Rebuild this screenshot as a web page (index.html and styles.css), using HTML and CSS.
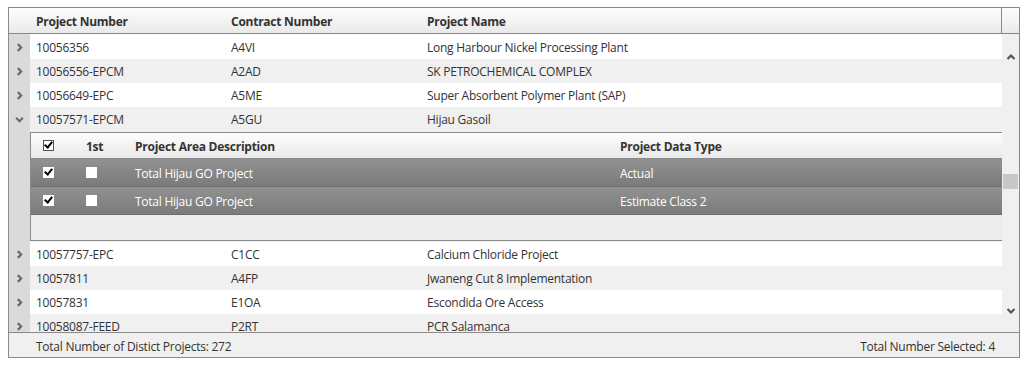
FILE: index.html
```html
<!DOCTYPE html>
<html lang="en">
<head>
    <meta charset="UTF-8">
    <title>Project Selection</title>
    <link rel="stylesheet" href="styles.css">
</head>
<body>
    <div class="grid">
        <!-- Column headers -->
        <div class="grid-header">
            <div class="expand-cell"></div>
            <div class="col col-number">Project Number</div>
            <div class="col col-contract">Contract Number</div>
            <div class="col col-name">Project Name</div>
            <div class="header-scroll"></div>
        </div>

        <!-- Body with rows and scrollbar -->
        <div class="grid-body">
            <div class="rows">
                <div class="row">
                    <div class="expand-cell"><svg class="chev" viewBox="0 0 8 8"><polyline points="2.5,1 5.5,4 2.5,7"/></svg></div>
                    <div class="col col-number">10056356</div>
                    <div class="col col-contract">A4VI</div>
                    <div class="col col-name">Long Harbour Nickel Processing Plant</div>
                </div>
                <div class="row alt">
                    <div class="expand-cell"><svg class="chev" viewBox="0 0 8 8"><polyline points="2.5,1 5.5,4 2.5,7"/></svg></div>
                    <div class="col col-number">10056556-EPCM</div>
                    <div class="col col-contract">A2AD</div>
                    <div class="col col-name">SK PETROCHEMICAL COMPLEX</div>
                </div>
                <div class="row">
                    <div class="expand-cell"><svg class="chev" viewBox="0 0 8 8"><polyline points="2.5,1 5.5,4 2.5,7"/></svg></div>
                    <div class="col col-number">10056649-EPC</div>
                    <div class="col col-contract">A5ME</div>
                    <div class="col col-name">Super Absorbent Polymer Plant (SAP)</div>
                </div>
                <div class="row alt">
                    <div class="expand-cell"><svg class="chev" viewBox="0 0 8 8"><polyline points="1,2.5 4,5.5 7,2.5"/></svg></div>
                    <div class="col col-number">10057571-EPCM</div>
                    <div class="col col-contract">A5GU</div>
                    <div class="col col-name">Hijau Gasoil</div>
                </div>

                <!-- Expanded detail -->
                <div class="detail-row">
                    <div class="expand-cell"></div>
                    <div class="detail">
                        <div class="detail-header">
                            <div class="d-check"><span class="box checked"></span></div>
                            <div class="d-first">1st</div>
                            <div class="d-desc">Project Area Description</div>
                            <div class="d-type">Project Data Type</div>
                        </div>
                        <div class="detail-line selected">
                            <div class="d-check"><span class="box checked"></span></div>
                            <div class="d-first"><span class="box"></span></div>
                            <div class="d-desc">Total Hijau GO Project</div>
                            <div class="d-type">Actual</div>
                        </div>
                        <div class="detail-line selected">
                            <div class="d-check"><span class="box checked"></span></div>
                            <div class="d-first"><span class="box"></span></div>
                            <div class="d-desc">Total Hijau GO Project</div>
                            <div class="d-type">Estimate Class 2</div>
                        </div>
                        <div class="detail-empty"></div>
                    </div>
                </div>

                <div class="row">
                    <div class="expand-cell"><svg class="chev" viewBox="0 0 8 8"><polyline points="2.5,1 5.5,4 2.5,7"/></svg></div>
                    <div class="col col-number">10057757-EPC</div>
                    <div class="col col-contract">C1CC</div>
                    <div class="col col-name">Calcium Chloride Project</div>
                </div>
                <div class="row alt">
                    <div class="expand-cell"><svg class="chev" viewBox="0 0 8 8"><polyline points="2.5,1 5.5,4 2.5,7"/></svg></div>
                    <div class="col col-number">10057811</div>
                    <div class="col col-contract">A4FP</div>
                    <div class="col col-name">Jwaneng Cut 8 Implementation</div>
                </div>
                <div class="row">
                    <div class="expand-cell"><svg class="chev" viewBox="0 0 8 8"><polyline points="2.5,1 5.5,4 2.5,7"/></svg></div>
                    <div class="col col-number">10057831</div>
                    <div class="col col-contract">E1OA</div>
                    <div class="col col-name">Escondida Ore Access</div>
                </div>
                <div class="row alt">
                    <div class="expand-cell"><svg class="chev" viewBox="0 0 8 8"><polyline points="2.5,1 5.5,4 2.5,7"/></svg></div>
                    <div class="col col-number">10058087-FEED</div>
                    <div class="col col-contract">P2RT</div>
                    <div class="col col-name">PCR Salamanca</div>
                </div>
            </div>

            <!-- Scrollbar -->
            <div class="scrollbar">
                <svg class="scroll-arrow" viewBox="0 0 10 8"><polyline points="1.5,6 5,2.5 8.5,6"/></svg>
                <div class="scroll-track"><div class="scroll-thumb"></div></div>
                <svg class="scroll-arrow" viewBox="0 0 10 8"><polyline points="1.5,2 5,5.5 8.5,2"/></svg>
            </div>
        </div>

        <!-- Footer -->
        <div class="grid-footer">
            <span>Total Number of Distict Projects: 272</span>
            <span>Total Number Selected: 4</span>
        </div>
    </div>
</body>
</html>
```

FILE: styles.css
```css
body {
    margin: 7px 8px;
    font-family: 'Open Sans', 'Liberation Sans', sans-serif;
    font-size: 12px;
    letter-spacing: -0.25px;
    color: #333;
    background: #fff;
}

.grid {
    width: 1010px;
    border: 1px solid #8a8a8a;
}

/* Header */
.grid-header {
    display: flex;
    height: 25px;
    border-bottom: 1px solid #8a8a8a;
    background: linear-gradient(#fdfdfd, #e9e9e9);
    font-weight: bold;
    align-items: center;
}

.grid-header .col {
    padding-top: 1px;
}

.grid-header .expand-cell {
    background: transparent;
}

.header-scroll {
    width: 17px;
    height: 100%;
    border-left: 1px solid #8a8a8a;
    margin-left: auto;
}

.expand-cell {
    width: 21px;
    flex-shrink: 0;
    align-self: stretch;
    background: #dadada;
    display: flex;
    align-items: center;
    justify-content: center;
}

.col {
    padding-left: 6px;
    white-space: nowrap;
    overflow: hidden;
}

.col-number { width: 189px; }
.col-contract { width: 190px; }
.col-name { flex: 1; }

/* Body */
.grid-body {
    display: flex;
    height: 298px;
    overflow: hidden;
}

.rows {
    flex: 1;
    overflow: hidden;
    padding-top: 1px;
    background: linear-gradient(to right, #dadada 21px, #fff 21px);
}

.row {
    display: flex;
    height: 24px;
    align-items: center;
    background: #fff;
}

.row .col {
    padding-top: 1px;
}

.row.alt {
    background: #f0f0f0;
}

.chev {
    width: 9px;
    height: 9px;
    fill: none;
    stroke: #6a6a6a;
    stroke-width: 1.9;
}

/* Detail panel */
.detail-row {
    display: flex;
    height: 111px;
    background: #f0f0f0;
}

.detail {
    flex: 1;
    margin-top: 1px;
    height: 107px;
    border: 1px solid #8a8a8a;
    border-right: none;
    background: #ececec;
    display: flex;
    flex-direction: column;
}

.detail-header,
.detail-line {
    display: flex;
    align-items: center;
    flex-shrink: 0;
}

.detail-header {
    height: 25px;
    border-bottom: 1px solid #8a8a8a;
    background: linear-gradient(#fdfdfd, #e9e9e9);
    font-weight: bold;
}

.detail-header .d-first,
.detail-header .d-desc,
.detail-header .d-type,
.detail-line .d-desc,
.detail-line .d-type {
    padding-top: 2px;
}

.detail-line {
    height: 27px;
    border-bottom: 1px solid #6e6e6e;
    background: linear-gradient(#919191, #7b7b7b);
    color: #fff;
}

.detail-empty {
    flex: 1;
}

.d-check {
    width: 36px;
    padding-left: 12px;
    display: flex;
}

.d-first {
    width: 49px;
    padding-left: 7px;
    display: flex;
}

.d-desc { width: 485px; }
.d-type { flex: 1; }

.box {
    width: 11px;
    height: 11px;
    box-sizing: border-box;
    background: #fff;
    position: relative;
}

.detail-header .box {
    border: 1px solid #555;
}

.box.checked::after {
    content: "";
    position: absolute;
    left: 3px;
    top: 0px;
    width: 3px;
    height: 6px;
    border: solid #000;
    border-width: 0 2px 2px 0;
    transform: rotate(40deg);
}

.detail-header .box.checked::after {
    left: 2px;
    top: -1px;
}

/* Scrollbar */
.scrollbar {
    width: 17px;
    flex-shrink: 0;
    background: #f0f0f0;
    display: flex;
    flex-direction: column;
    align-items: center;
}

.scroll-arrow {
    width: 10px;
    height: 8px;
    fill: none;
    stroke: #555;
    stroke-width: 2.2;
    margin: 19px 0 6px;
}

.scroll-arrow:last-child {
    margin: 6px 0 17px;
}

.scroll-track {
    flex: 1;
    width: 100%;
}

.scroll-thumb {
    width: 15px;
    height: 15px;
    margin: 107px 0 0 1px;
    background: #c8c8c8;
}

/* Footer */
.grid-footer {
    display: flex;
    justify-content: space-between;
    height: 25px;
    align-items: center;
    padding: 3px 24px 0 27px;
    box-sizing: border-box;
    border-top: 1px solid #8a8a8a;
    background: #f0f0f0;
}
```
